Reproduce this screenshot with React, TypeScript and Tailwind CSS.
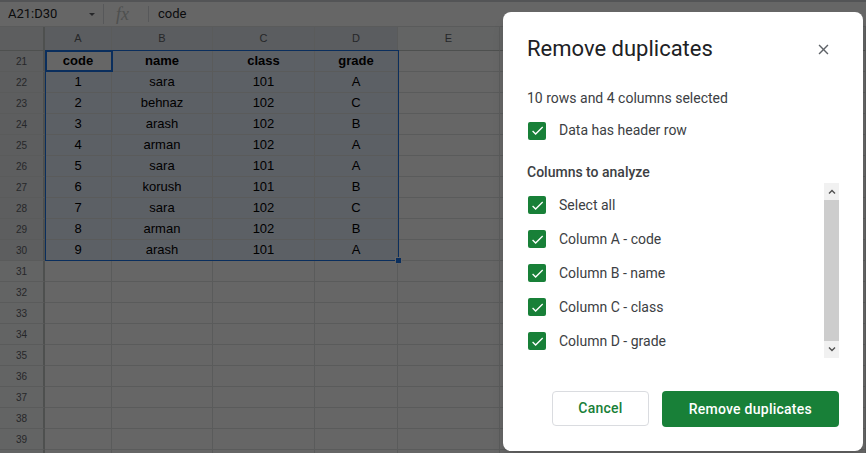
import React from "react";

const rows: { n: number; cells: string[] }[] = [
  { n: 21, cells: ["code", "name", "class", "grade"] },
  { n: 22, cells: ["1", "sara", "101", "A"] },
  { n: 23, cells: ["2", "behnaz", "102", "C"] },
  { n: 24, cells: ["3", "arash", "102", "B"] },
  { n: 25, cells: ["4", "arman", "102", "A"] },
  { n: 26, cells: ["5", "sara", "101", "A"] },
  { n: 27, cells: ["6", "korush", "101", "B"] },
  { n: 28, cells: ["7", "sara", "102", "C"] },
  { n: 29, cells: ["8", "arman", "102", "B"] },
  { n: 30, cells: ["9", "arash", "101", "A"] },
];

const emptyRows = [31, 32, 33, 34, 35, 36, 37, 38, 39, 40];
const colLetters = ["A", "B", "C", "D", "E", "F"];

const Check = () => (
  <span className="flex h-[18px] w-[18px] shrink-0 items-center justify-center rounded-[2px] bg-[#188038]">
    <svg width="15" height="15" viewBox="0 0 24 24" fill="white">
      <path d="M9 16.17L4.83 12l-1.42 1.41L9 19 21 7l-1.41-1.41z" />
    </svg>
  </span>
);

const Row = ({ n, cells }: { n: number; cells: string[] }) => {
  const selected = n >= 21 && n <= 30;
  return (
    <>
      <div
        className={`flex h-[21px] items-center justify-center border-b border-r-2 border-b-[#e2e3e3] border-r-[#c4c7c5] text-[10px] text-[#5f6368] ${
          selected ? "bg-[#e8eaed]" : "bg-[#f8f9fa]"
        }`}
      >
        {n}
      </div>
      {[0, 1, 2, 3, 4, 5].map((i) => {
        const inRange = selected && i < 4;
        const active = n === 21 && i === 0;
        return (
          <div
            key={i}
            className={`flex h-[21px] items-center justify-center border-b border-r border-[#e2e3e3] text-[13px] text-black ${
              inRange && !active ? "bg-[#e7effd]" : "bg-white"
            } ${n === 21 && i < 4 ? "font-bold" : ""}`}
          >
            {i < 4 ? cells[i] ?? "" : ""}
          </div>
        );
      })}
    </>
  );
};

export default function App() {
  const items = ["Select all", "Column A - code", "Column B - name", "Column C - class", "Column D - grade"];
  return (
    <div className="relative h-[453px] w-[866px] overflow-hidden bg-white font-['Liberation_Sans',Arial,sans-serif]">
      {/* formula bar */}
      <div className="flex h-[27px] items-center border-t-2 border-b border-t-[#d0d3d6] border-b-[#e2e3e3] font-['Roboto',sans-serif] text-[13px] text-[#202124]">
        <div className="flex w-[103px] items-center justify-between pl-2 pr-[8px]">
          <span>A21:D30</span>
          <span className="h-0 w-0 border-x-[3px] border-t-[3px] border-x-transparent border-t-[#5f6368]" />
        </div>
        <span className="h-[20px] w-px bg-[#dadce0]" />
        <span className="w-[44px] pl-[12px] font-['Liberation_Serif',serif] text-[18px] italic leading-none text-[#c4c7c5]">
          fx
        </span>
        <span className="h-[16px] w-px bg-[#dadce0]" />
        <span className="pl-[9px]">code</span>
      </div>

      {/* grid */}
      <div className="relative">
        <div className="grid grid-cols-[45px_67px_101px_102px_83px_102px_366px]">
          <div className="h-[24px] border-b border-r-2 border-b-[#c4c7c5] border-r-[#c4c7c5] bg-[#e8eaed]" />
          {colLetters.map((c, i) => (
            <div
              key={c}
              className={`flex h-[24px] items-center justify-center border-b border-r border-b-[#c4c7c5] border-r-[#e2e3e3] text-[11px] text-[#5f6368] ${
                i < 4 ? "bg-[#e3e8ef]" : "bg-[#f8f9fa]"
              }`}
            >
              {c}
            </div>
          ))}
          {rows.map((r) => (
            <Row key={r.n} n={r.n} cells={r.cells} />
          ))}
          {emptyRows.map((n) => (
            <Row key={n} n={n} cells={[]} />
          ))}
        </div>
        {/* selection */}
        <div className="pointer-events-none absolute left-[45px] top-[23px] h-[211px] w-[354px] border border-[#1a73e8]" />
        <div className="pointer-events-none absolute left-[45px] top-[23px] h-[22px] w-[68px] border-2 border-[#1a73e8]" />
        <div className="pointer-events-none absolute left-[395px] top-[230px] h-[7px] w-[7px] border border-white bg-[#1a73e8]" />
      </div>

      {/* modal backdrop */}
      <div className="absolute inset-0 bg-black/60" />

      {/* dialog */}
      <div className="absolute left-[503px] top-[12px] flex h-[439px] w-[360px] flex-col rounded-[8px] bg-white px-[24px] pb-[24px] font-['Roboto',sans-serif] text-[#3c4043] shadow-lg">
        <div className="flex items-center justify-between pt-[23px]">
          <h1 className="text-[22px] leading-[28px] text-[#202124]">Remove duplicates</h1>
          <svg width="17" height="17" viewBox="0 0 24 24" fill="#5f6368" className="mr-[7px]">
            <path d="M19 6.41L17.59 5 12 10.59 6.41 5 5 6.41 10.59 12 5 17.59 6.41 19 12 13.41 17.59 19 19 17.59 13.41 12z" />
          </svg>
        </div>
        <p className="mt-[25px] text-[14px] leading-[20px]">10 rows and 4 columns selected</p>
        <label className="mt-[12px] flex items-center gap-[13px] pl-px text-[14px]">
          <Check />
          <span>Data has header row</span>
        </label>
        <p className="mt-[21px] text-[14px] font-medium leading-[20px]">Columns to analyze</p>
        <div className="mt-px flex h-[175px]">
          <div className="flex flex-1 flex-col pt-[5px]">
            {items.map((it) => (
              <label key={it} className="flex h-[34px] items-center gap-[13px] pl-px text-[14px]">
                <Check />
                <span>{it}</span>
              </label>
            ))}
          </div>
          <div className="flex w-[15px] flex-col bg-[#f1f1f1]">
            <div className="flex h-[17px] items-center justify-center">
              <svg width="8" height="5" viewBox="0 0 8 5">
                <path d="M1 4.5L4 1.5 7 4.5" stroke="#505050" strokeWidth="1.4" fill="none" />
              </svg>
            </div>
            <div className="flex-1 bg-[#cdcdcd]" />
            <div className="flex h-[17px] items-center justify-center">
              <svg width="8" height="5" viewBox="0 0 8 5">
                <path d="M1 0.5L4 3.5 7 0.5" stroke="#505050" strokeWidth="1.4" fill="none" />
              </svg>
            </div>
          </div>
        </div>
        <div className="mt-auto flex justify-end gap-[13px]">
          <button className="h-[35px] rounded-[4px] border border-[#dadce0] px-[25px] text-[14px] font-medium tracking-[0.25px] text-[#188038]">
            Cancel
          </button>
          <button className="h-[36px] rounded-[4px] bg-[#188038] px-[27px] text-[14px] font-medium tracking-[0.25px] text-white">
            Remove duplicates
          </button>
        </div>
      </div>
    </div>
  );
}
